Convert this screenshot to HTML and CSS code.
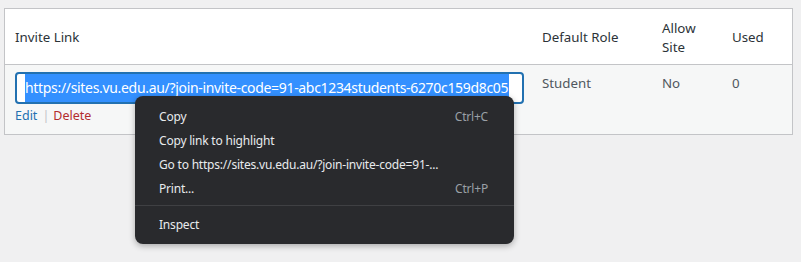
FILE: index.html
```html
<!DOCTYPE html>
<html>
<head>
<meta charset="utf-8">
<link rel="stylesheet" href="styles.css">
</head>
<body>
<div class="wrap">
  <table class="list">
    <thead>
      <tr>
        <th class="c-link">Invite Link</th>
        <th class="c-role">Default Role</th>
        <th class="c-allow">Allow Site</th>
        <th class="c-used">Used</th>
      </tr>
    </thead>
    <tbody>
      <tr>
        <td class="c-link">
          <div class="field"><span class="sel">https://sites.vu.edu.au/?join-invite-code=91-abc1234students-6270c159d8c05</span></div>
          <div class="actions"><a class="edit">Edit</a><span class="sep">|</span><a class="del">Delete</a></div>
        </td>
        <td>Student</td>
        <td>No</td>
        <td>0</td>
      </tr>
    </tbody>
  </table>
  <div class="menu">
    <div class="item"><span>Copy</span><span class="key">Ctrl+C</span></div>
    <div class="item"><span>Copy link to highlight</span></div>
    <div class="item"><span>Go to https://sites.vu.edu.au/?join-invite-code=91-...</span></div>
    <div class="item"><span>Print...</span><span class="key">Ctrl+P</span></div>
    <div class="divider"></div>
    <div class="item"><span>Inspect</span></div>
  </div>
</div>
</body>
</html>
```

FILE: styles.css
```css
html, body {
  margin: 0;
  padding: 0;
  background: #f0f0f1;
}
body {
  font-family: "Noto Sans", "Open Sans", sans-serif;
  color: #3c434a;
  min-height: 262px;
}
.wrap {
  position: relative;
  padding: 8px 8px 0 4px;
  height: 254px;
}
.list {
  width: 789px;
  border: 1px solid #c3c4c7;
  border-collapse: collapse;
  background: #fff;
  font-size: 13.3px;
  line-height: 19px;
}
.list th {
  text-align: left;
  font-weight: 400;
  padding: 9px 10px 7px;
  height: 39px;
  vertical-align: middle;
  border-bottom: 1px solid #c3c4c7;
  color: #2c3338;
}
.list td {
  background: #f6f7f7;
  padding: 9px 10px 10px;
  vertical-align: top;
  color: #50575e;
}
.list td.c-link { padding: 7px 6px 9px 10px; }
.list th.c-link { width: 507px; }
.list th.c-role { width: 100px; }
.list th.c-allow { width: 50px; }
.field {
  width: 505px;
  height: 28px;
  border: 2px solid #2271b1;
  border-radius: 4px;
  background: #fff;
  box-sizing: content-box;
  padding: 0;
  overflow: hidden;
  white-space: nowrap;
  display: flex;
  align-items: center;
}
.sel {
  margin-left: 8px;
  background: #3390ff;
  color: #fff;
  font-size: 14px;
  line-height: 28px;
  letter-spacing: -0.32px;
  padding-right: 1px;
}
.actions {
  font-size: 12.5px;
  line-height: 18px;
  margin-top: 3px;
  margin-left: 0;
}
.edit { color: #2271b1; }
.del { color: #b32d2e; }
.sep { color: #c3c4c7; margin: 0 4px 0 5px; }
.menu {
  position: absolute;
  left: 135px;
  top: 96px;
  width: 379px;
  box-sizing: border-box;
  background: #292a2d;
  border-radius: 8px;
  padding: 8px 0;
  box-shadow: 0 2px 6px rgba(0,0,0,0.3);
  font-size: 12px;
  letter-spacing: -0.2px;
  color: #e8eaed;
  z-index: 5;
}
.item {
  height: 24px;
  display: flex;
  align-items: center;
  justify-content: space-between;
  padding: 0 26px 0 24px;
}
.key { color: #9aa0a6; }
.divider {
  height: 1px;
  background: #3f4043;
  margin: 5px 0 6px;
}
```
